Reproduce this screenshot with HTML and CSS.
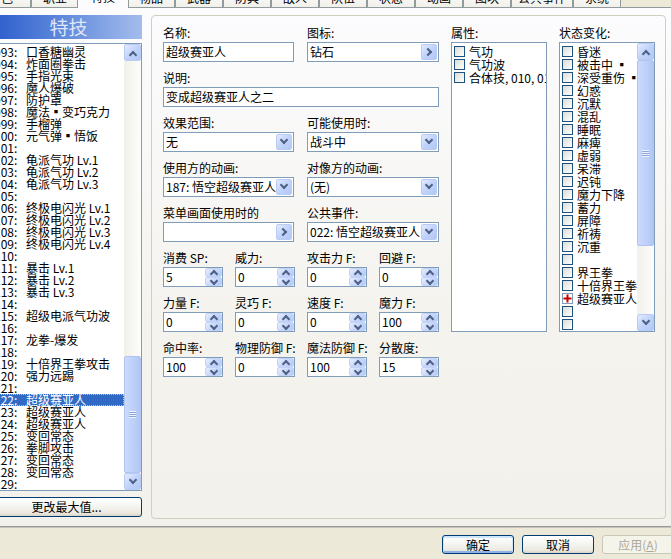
FILE: index.html
```html
<!DOCTYPE html>
<html lang="zh-CN">
<head>
<meta charset="utf-8">
<title>数据库 - 特技</title>
<link rel="stylesheet" href="styles.css">
</head>
<body>
<div class="tabstrip">
  <div class="tab">色</div>
  <div class="tab">职业</div>
  <div class="tab active">特技</div>
  <div class="tab">物品</div>
  <div class="tab">武器</div>
  <div class="tab">防具</div>
  <div class="tab">敌人</div>
  <div class="tab">队伍</div>
  <div class="tab">状态</div>
  <div class="tab">动画</div>
  <div class="tab">图块</div>
  <div class="tab">公共事件</div>
  <div class="tab">系统</div>
</div>

<div class="page">
  <aside class="left">
    <div class="hdr">特技</div>
    <div class="listbox">
      <ul class="items">
        <li><span class="no">093:</span>口香糖幽灵</li>
        <li><span class="no">094:</span>炸面圈拳击</li>
        <li><span class="no">095:</span>手指光束</li>
        <li><span class="no">096:</span>魔人爆破</li>
        <li><span class="no">097:</span>防护罩</li>
        <li><span class="no">098:</span>魔法▪变巧克力</li>
        <li><span class="no">099:</span>手榴弹</li>
        <li><span class="no">100:</span>元气弹▪悟饭</li>
        <li><span class="no">101:</span></li>
        <li><span class="no">102:</span>龟派气功 Lv.1</li>
        <li><span class="no">103:</span>龟派气功 Lv.2</li>
        <li><span class="no">104:</span>龟派气功 Lv.3</li>
        <li><span class="no">105:</span></li>
        <li><span class="no">106:</span>终极电闪光 Lv.1</li>
        <li><span class="no">107:</span>终极电闪光 Lv.2</li>
        <li><span class="no">108:</span>终极电闪光 Lv.3</li>
        <li><span class="no">109:</span>终极电闪光 Lv.4</li>
        <li><span class="no">110:</span></li>
        <li><span class="no">111:</span>暴击 Lv.1</li>
        <li><span class="no">112:</span>暴击 Lv.2</li>
        <li><span class="no">113:</span>暴击 Lv.3</li>
        <li><span class="no">114:</span></li>
        <li><span class="no">115:</span>超级电派气功波</li>
        <li><span class="no">116:</span></li>
        <li><span class="no">117:</span>龙拳-爆发</li>
        <li><span class="no">118:</span></li>
        <li><span class="no">119:</span>十倍界王拳攻击</li>
        <li><span class="no">120:</span>强力远踢</li>
        <li><span class="no">121:</span></li>
        <li class="sel"><span class="no">122:</span>超级赛亚人</li>
        <li><span class="no">123:</span>超级赛亚人</li>
        <li><span class="no">124:</span>超级赛亚人</li>
        <li><span class="no">125:</span>变回常态</li>
        <li><span class="no">126:</span>拳脚攻击</li>
        <li><span class="no">127:</span>变回常态</li>
        <li><span class="no">128:</span>变回常态</li>
        <li><span class="no">129:</span></li>
      </ul>
      <div class="vscroll">
        <div class="sbtn"><i class="chev up"></i></div>
        <div class="track end"><div class="thumb thumb-left"><i class="grip"></i></div></div>
        <div class="sbtn"><i class="chev down"></i></div>
      </div>
    </div>
    <div class="btn maxbtn">更改最大值...</div>
  </aside>

  <section class="group">
    <div class="form">
      <div class="g2">
        <div class="field"><div class="lbl">名称:</div><div class="ctl"><span class="v">超级赛亚人</span></div></div>
        <div class="field"><div class="lbl">图标:</div><div class="ctl"><span class="v">钻石</span><span class="xbtn"><i class="chev right"></i></span></div></div>
      </div>
      <div class="field"><div class="lbl">说明:</div><div class="ctl"><span class="v">变成超级赛亚人之二</span></div></div>
      <div class="g2">
        <div class="field"><div class="lbl">效果范围:</div><div class="ctl"><span class="v">无</span><span class="xbtn"><i class="chev down"></i></span></div></div>
        <div class="field"><div class="lbl">可能使用时:</div><div class="ctl"><span class="v">战斗中</span><span class="xbtn"><i class="chev down"></i></span></div></div>
      </div>
      <div class="g2">
        <div class="field"><div class="lbl">使用方的动画:</div><div class="ctl"><span class="v">187: 悟空超级赛亚人</span><span class="xbtn"><i class="chev down"></i></span></div></div>
        <div class="field"><div class="lbl">对像方的动画:</div><div class="ctl"><span class="v">(无)</span><span class="xbtn"><i class="chev down"></i></span></div></div>
      </div>
      <div class="g2">
        <div class="field"><div class="lbl">菜单画面使用时的</div><div class="ctl"><span class="v"></span><span class="xbtn"><i class="chev right"></i></span></div></div>
        <div class="field"><div class="lbl">公共事件:</div><div class="ctl"><span class="v">022: 悟空超级赛亚人</span><span class="xbtn"><i class="chev down"></i></span></div></div>
      </div>
      <div class="g4">
        <div class="field"><div class="lbl">消费 SP:</div><div class="ctl"><span class="v">5</span><span class="spin"><b class="su"></b><b class="sd"></b></span></div></div>
        <div class="field"><div class="lbl">威力:</div><div class="ctl"><span class="v">0</span><span class="spin"><b class="su"></b><b class="sd"></b></span></div></div>
        <div class="field"><div class="lbl">攻击力 F:</div><div class="ctl"><span class="v">0</span><span class="spin"><b class="su"></b><b class="sd"></b></span></div></div>
        <div class="field"><div class="lbl">回避 F:</div><div class="ctl"><span class="v">0</span><span class="spin"><b class="su"></b><b class="sd"></b></span></div></div>
      </div>
      <div class="g4">
        <div class="field"><div class="lbl">力量 F:</div><div class="ctl"><span class="v">0</span><span class="spin"><b class="su"></b><b class="sd"></b></span></div></div>
        <div class="field"><div class="lbl">灵巧 F:</div><div class="ctl"><span class="v">0</span><span class="spin"><b class="su"></b><b class="sd"></b></span></div></div>
        <div class="field"><div class="lbl">速度 F:</div><div class="ctl"><span class="v">0</span><span class="spin"><b class="su"></b><b class="sd"></b></span></div></div>
        <div class="field"><div class="lbl">魔力 F:</div><div class="ctl"><span class="v">100</span><span class="spin"><b class="su"></b><b class="sd"></b></span></div></div>
      </div>
      <div class="g4">
        <div class="field"><div class="lbl">命中率:</div><div class="ctl"><span class="v">100</span><span class="spin"><b class="su"></b><b class="sd"></b></span></div></div>
        <div class="field"><div class="lbl">物理防御 F:</div><div class="ctl"><span class="v">0</span><span class="spin"><b class="su"></b><b class="sd"></b></span></div></div>
        <div class="field"><div class="lbl">魔法防御 F:</div><div class="ctl"><span class="v">100</span><span class="spin"><b class="su"></b><b class="sd"></b></span></div></div>
        <div class="field"><div class="lbl">分散度:</div><div class="ctl"><span class="v">15</span><span class="spin"><b class="su"></b><b class="sd"></b></span></div></div>
      </div>
    </div>

    <div class="col">
      <div class="lbl">属性:</div>
      <div class="cklist">
        <ul class="ckitems">
          <li><i class="ck"></i>气功</li>
          <li><i class="ck"></i>气功波</li>
          <li><i class="ck"></i>合体技, 010, 011</li>
        </ul>
      </div>
    </div>

    <div class="col">
      <div class="lbl">状态变化:</div>
      <div class="cklist">
        <ul class="ckitems">
          <li><i class="ck"></i>昏迷</li>
          <li><i class="ck"></i>被击中 ▪</li>
          <li><i class="ck"></i>深受重伤 ▪</li>
          <li><i class="ck"></i>幻惑</li>
          <li><i class="ck"></i>沉默</li>
          <li><i class="ck"></i>混乱</li>
          <li><i class="ck"></i>睡眠</li>
          <li><i class="ck"></i>麻痺</li>
          <li><i class="ck"></i>虚弱</li>
          <li><i class="ck"></i>呆滞</li>
          <li><i class="ck"></i>迟钝</li>
          <li><i class="ck"></i>魔力下降</li>
          <li><i class="ck"></i>蓄力</li>
          <li><i class="ck"></i>屏障</li>
          <li><i class="ck"></i>祈祷</li>
          <li><i class="ck"></i>沉重</li>
          <li><i class="ck"></i></li>
          <li><i class="ck"></i>界王拳</li>
          <li><i class="ck"></i>十倍界王拳</li>
          <li><i class="ck plus"><svg width="9" height="9" viewBox="0 0 9 9"><path d="M4.5 0.5V8.5M0.5 4.5H8.5" stroke="#c80000" stroke-width="2"/></svg></i>超级赛亚人</li>
          <li><i class="ck"></i></li>
          <li><i class="ck"></i></li>
        </ul>
        <div class="vscroll">
          <div class="sbtn"><i class="chev up"></i></div>
          <div class="track"><div class="thumb thumb-state"><i class="grip"></i></div></div>
          <div class="sbtn"><i class="chev down"></i></div>
        </div>
      </div>
    </div>
  </section>
</div>

<div class="footer">
  <div class="btn fbtn default">确定</div>
  <div class="btn fbtn">取消</div>
  <div class="btn fbtn disabled">应用(<u>A</u>)</div>
</div>
</body>
</html>
```

FILE: styles.css
```css
* { box-sizing: border-box; }
html, body { margin: 0; padding: 0; }
body {
  width: 671px;
  height: 559px;
  overflow: hidden;
  background: #ece9d8;
  font-family: "Noto Sans CJK SC", "Liberation Sans", sans-serif;
  font-size: 12px;
  line-height: 12px;
  color: #000;
}
ul { margin: 0; padding: 0; list-style: none; }

/* ---------- tabs ---------- */
.tabstrip {
  display: flex;
  align-items: flex-end;
  height: 8px;
  overflow: hidden;
  margin-left: -17px;
  position: relative;
  z-index: 2;
}
.tab {
  flex: none;
  height: 19px;
  min-width: 48px;
  padding: 0 6px 3px;
  margin-bottom: 1px;
  border: 1px solid #919b9c;
  border-bottom: none;
  border-radius: 3px 3px 0 0;
  background: linear-gradient(#ffffff, #f1f0ea);
  display: flex;
  align-items: flex-end;
  justify-content: center;
  white-space: nowrap;
}
.tab.active {
  height: 22px;
  min-width: 52px;
  margin: 0 -2px;
  padding-bottom: 5px;
  background: #fcfcfe;
  position: relative;
  z-index: 1;
}

/* ---------- page ---------- */
.page {
  margin: -1px 0 0 -14px;
  width: 690px;
  height: 520px;
  border: 1px solid #919b9c;
  box-shadow: 0 1px 0 #c9c6b6;
  background: linear-gradient(#fcfcfe, #f4f3ee 60%, #f3f1ec);
  display: flex;
  align-items: flex-start;
  gap: 9px;
  padding: 7px 0 0 4px;
}

/* ---------- left column ---------- */
.left {
  width: 151px;
  flex: none;
  display: flex;
  flex-direction: column;
}
.hdr {
  height: 24px;
  margin-bottom: 4px;
  background: linear-gradient(to right, #2c5ccc, #5d87db 45%, #a3bcec);
  color: #dfe6f7;
  font-size: 19px;
  line-height: 24px;
  text-align: center;
  padding-left: 4px;
}
.listbox {
  height: 448px;
  border: 1px solid #7f9db9;
  background: #fff;
  display: flex;
  margin-bottom: 6px;
}
.items {
  flex: 1;
  min-width: 0;
  padding-top: 2px;
  overflow: hidden;
}
.items li {
  height: 12px;
  line-height: 12px;
  padding-left: 2px;
  white-space: nowrap;
}
.items .no {
  display: inline-block;
  width: 32px;
}
.items li.sel {
  background: #316ac5;
  color: #fff;
  outline: 1px dotted #e8c27a;
  outline-offset: -1px;
}

/* ---------- scrollbars ---------- */
.vscroll {
  width: 17px;
  flex: none;
  display: flex;
  flex-direction: column;
}
.sbtn {
  height: 17px;
  flex: none;
  border: 1px solid #b9cbf3;
  border-radius: 2px;
  background: linear-gradient(135deg, #e3ebfe, #c1d3fb 50%, #b2c7f5);
  display: flex;
  align-items: center;
  justify-content: center;
}
.track {
  flex: 1;
  background: linear-gradient(to right, #f1f0ea, #fdfdfb);
  display: flex;
  flex-direction: column;
}
.track.end { justify-content: flex-end; }
.thumb {
  border: 1px solid #b0c3f1;
  border-radius: 2px;
  background: linear-gradient(to right, #cbdafd, #bccff8 60%, #b3c7f5);
  display: flex;
  align-items: center;
  justify-content: center;
}
.thumb-left { height: 117px; }
.thumb-state { height: 186px; }
.grip {
  display: block;
  width: 7px;
  height: 7px;
  background: repeating-linear-gradient(#eef3fe 0 1px, #8ca6e4 1px 2px);
}

/* chevrons */
.chev {
  display: block;
  width: 6px;
  height: 6px;
  border: solid #4d6185;
  border-width: 0 2px 2px 0;
}
.chev.down { transform: translateY(-2px) rotate(45deg); }
.chev.up { transform: translateY(2px) rotate(-135deg); }
.chev.right { transform: translateX(-1px) rotate(-45deg); }

/* ---------- buttons ---------- */
.btn {
  border: 1px solid #003c74;
  border-radius: 3px;
  background: linear-gradient(#ffffff, #f5f5f1 45%, #ebe8de 85%, #d8d3c6);
  display: flex;
  align-items: center;
  justify-content: center;
  white-space: nowrap;
}
.maxbtn { height: 20px; }

/* ---------- group ---------- */
.group {
  width: 515px;
  height: 504px;
  flex: none;
  border: 1px solid #d0d0bf;
  border-radius: 4px;
  padding: 10px 10px 0 11px;
  display: flex;
  align-items: flex-start;
  gap: 12px;
}
.form {
  width: 276px;
  flex: none;
  display: flex;
  flex-direction: column;
  gap: 9px;
}
.g2 {
  display: grid;
  grid-template-columns: 131px 132px;
  column-gap: 13px;
}
.g4 {
  display: grid;
  grid-template-columns: repeat(4, 60px);
  column-gap: 12px;
}
.field {
  display: flex;
  flex-direction: column;
  min-width: 0;
}
.lbl {
  height: 14px;
  line-height: 14px;
  margin-bottom: 2px;
  white-space: nowrap;
}
.ctl {
  height: 20px;
  border: 1px solid #7f9db9;
  background: #fff;
  display: flex;
  align-items: stretch;
  overflow: hidden;
}
.ctl .v {
  flex: 1;
  min-width: 0;
  padding-left: 2px;
  line-height: 18px;
  white-space: nowrap;
  overflow: hidden;
}
.xbtn {
  width: 16px;
  flex: none;
  margin: 1px 1px 1px 0;
  border: 1px solid #b9cbf3;
  border-radius: 2px;
  background: linear-gradient(135deg, #e3ebfe, #c1d3fb 50%, #b2c7f5);
  display: flex;
  align-items: center;
  justify-content: center;
}
.spin {
  width: 17px;
  flex: none;
  display: flex;
  flex-direction: column;
}
.spin b {
  flex: 1;
  border: 1px solid #c3d3f7;
  border-radius: 2px;
  background: linear-gradient(135deg, #e5edfe, #c6d6fb 55%, #b6caf6);
  display: flex;
  align-items: center;
  justify-content: center;
}
.spin b::after {
  content: "";
  display: block;
  width: 4px;
  height: 4px;
  border: solid #4d6185;
  border-width: 0 2px 2px 0;
}
.spin .su::after { transform: translateY(1px) rotate(-135deg); }
.spin .sd::after { transform: translateY(-1px) rotate(45deg); }

/* ---------- check lists ---------- */
.col {
  width: 96px;
  flex: none;
  display: flex;
  flex-direction: column;
}
.cklist {
  height: 290px;
  border: 1px solid #7f9db9;
  background: #fff;
  display: flex;
}
.ckitems {
  flex: 1;
  min-width: 0;
  padding: 2px 0 0 2px;
  overflow: hidden;
}
.ckitems li {
  height: 13px;
  line-height: 13px;
  display: flex;
  align-items: center;
  gap: 4px;
  white-space: nowrap;
}
.ck {
  width: 11px;
  height: 11px;
  flex: none;
  border: 1px solid #1c5180;
  background: linear-gradient(135deg, #dcdcd7, #f4f4f1 70%, #ffffff);
  display: flex;
  align-items: center;
  justify-content: center;
}
.ck.plus {
  border-color: #7f9db9;
  background: #fff;
}

/* ---------- footer ---------- */
.footer {
  display: flex;
  justify-content: flex-end;
  gap: 8px;
  margin-right: -3px;
  padding-top: 8px;
}
.fbtn {
  width: 72px;
  height: 19px;
}
.fbtn.default {
  box-shadow: inset 0 1px 0 1px #cee7ff, inset 0 -1px 0 1px #8fb0e8;
}
.fbtn.disabled {
  border-color: #c9c7ba;
  background: #f5f4ea;
  color: #aca899;
}
```
